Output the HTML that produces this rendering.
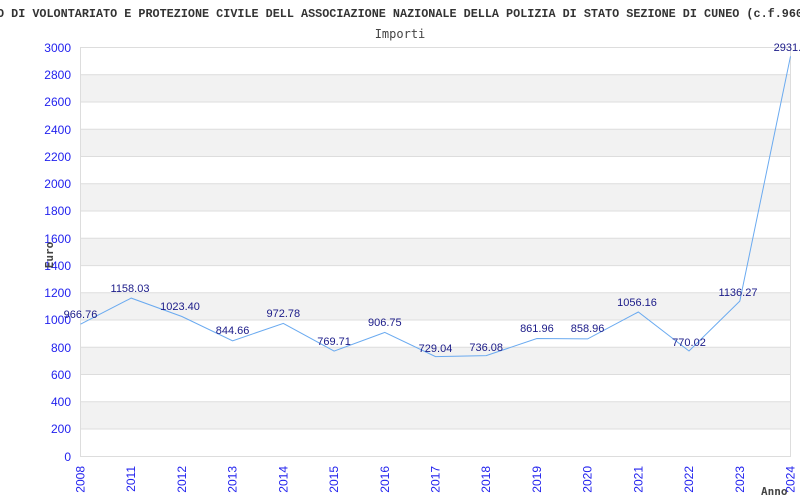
<!DOCTYPE html>
<html><head><meta charset="utf-8"><style>
html,body{margin:0;padding:0;background:#fff;width:800px;height:500px;overflow:hidden}
</style></head><body>
<svg width="800" height="500" xmlns="http://www.w3.org/2000/svg">
<text x="-3" y="17" font-family="Liberation Mono, monospace" font-weight="bold" font-size="12" fill="#333" textLength="806" lengthAdjust="spacingAndGlyphs">O DI VOLONTARIATO E PROTEZIONE CIVILE DELL ASSOCIAZIONE NAZIONALE DELLA POLIZIA DI STATO SEZIONE DI CUNEO (c.f.960</text>
<text x="400" y="38" text-anchor="middle" font-family="DejaVu Sans Mono, monospace" font-size="12" fill="#444">Importi</text>
<g fill="#f2f2f2">
<rect x="80.5" y="401.5" width="710" height="27.3"/>
<rect x="80.5" y="347" width="710" height="27.3"/>
<rect x="80.5" y="292.5" width="710" height="27.3"/>
<rect x="80.5" y="238" width="710" height="27.3"/>
<rect x="80.5" y="183.4" width="710" height="27.3"/>
<rect x="80.5" y="128.9" width="710" height="27.3"/>
<rect x="80.5" y="74.3" width="710" height="27.3"/>
</g>
<g stroke="#ddd" stroke-width="1">
<line x1="80" y1="47.5" x2="791" y2="47.5"/>
<line x1="80" y1="74.8" x2="791" y2="74.8"/>
<line x1="80" y1="102" x2="791" y2="102"/>
<line x1="80" y1="129.3" x2="791" y2="129.3"/>
<line x1="80" y1="156.5" x2="791" y2="156.5"/>
<line x1="80" y1="183.8" x2="791" y2="183.8"/>
<line x1="80" y1="211" x2="791" y2="211"/>
<line x1="80" y1="238.3" x2="791" y2="238.3"/>
<line x1="80" y1="265.6" x2="791" y2="265.6"/>
<line x1="80" y1="292.8" x2="791" y2="292.8"/>
<line x1="80" y1="320" x2="791" y2="320"/>
<line x1="80" y1="347.3" x2="791" y2="347.3"/>
<line x1="80" y1="374.5" x2="791" y2="374.5"/>
<line x1="80" y1="401.8" x2="791" y2="401.8"/>
<line x1="80" y1="429" x2="791" y2="429"/>
<line x1="80" y1="456.5" x2="791" y2="456.5"/>
<line x1="80.5" y1="47" x2="80.5" y2="457"/>
<line x1="790.5" y1="47" x2="790.5" y2="457"/>
</g>
<g font-family="Liberation Sans, sans-serif" font-size="12" fill="#2222ee" text-anchor="end">
<text x="71" y="52">3000</text><text x="71" y="79">2800</text><text x="71" y="106">2600</text><text x="71" y="134">2400</text><text x="71" y="161">2200</text><text x="71" y="188">2000</text><text x="71" y="215">1800</text><text x="71" y="243">1600</text><text x="71" y="270">1400</text><text x="71" y="297">1200</text><text x="71" y="324">1000</text><text x="71" y="352">800</text><text x="71" y="379">600</text><text x="71" y="406">400</text><text x="71" y="433">200</text><text x="71" y="461">0</text>
</g>
<g font-family="Liberation Sans, sans-serif" font-size="12" fill="#2222ee" text-anchor="end">
<text transform="translate(84.5,466) rotate(-90)">2008</text>
<text transform="translate(135.2,466) rotate(-90)">2011</text>
<text transform="translate(185.9,466) rotate(-90)">2012</text>
<text transform="translate(236.6,466) rotate(-90)">2013</text>
<text transform="translate(287.3,466) rotate(-90)">2014</text>
<text transform="translate(338.1,466) rotate(-90)">2015</text>
<text transform="translate(388.8,466) rotate(-90)">2016</text>
<text transform="translate(439.5,466) rotate(-90)">2017</text>
<text transform="translate(490.2,466) rotate(-90)">2018</text>
<text transform="translate(540.9,466) rotate(-90)">2019</text>
<text transform="translate(591.6,466) rotate(-90)">2020</text>
<text transform="translate(642.3,466) rotate(-90)">2021</text>
<text transform="translate(693,466) rotate(-90)">2022</text>
<text transform="translate(743.8,466) rotate(-90)">2023</text>
<text transform="translate(794.5,466) rotate(-90)">2024</text>
</g>
<text transform="translate(53,255) rotate(-90)" text-anchor="middle" font-family="DejaVu Sans Mono, monospace" font-weight="bold" font-size="11" fill="#444">Euro</text>
<text x="761" y="495" font-family="DejaVu Sans Mono, monospace" font-weight="bold" font-size="11" fill="#444">Anno</text>
<polyline fill="none" stroke="#6aaaf0" stroke-width="1" points="80.5,324.2 131.2,298.1 181.9,316.5 232.6,340.8 283.3,323.4 334.1,351.1 384.8,332.4 435.5,356.6 486.2,355.6 536.9,338.5 587.6,338.9 638.3,312 689,351 739.8,301.1 790.5,56.3"/>
<g font-family="Liberation Sans, sans-serif" font-size="11" fill="#1a1a88" text-anchor="middle">
<text x="80.5" y="318">966.76</text>
<text x="130" y="292">1158.03</text>
<text x="180" y="310">1023.40</text>
<text x="232.6" y="334">844.66</text>
<text x="283.3" y="317">972.78</text>
<text x="334.1" y="345">769.71</text>
<text x="384.8" y="326">906.75</text>
<text x="435.5" y="352">729.04</text>
<text x="486.2" y="351">736.08</text>
<text x="536.9" y="332">861.96</text>
<text x="587.6" y="332">858.96</text>
<text x="637" y="306">1056.16</text>
<text x="689" y="346">770.02</text>
<text x="738" y="296">1136.27</text>
<text x="790.5" y="51">2931.5</text>
</g>
</svg>
</body></html>
